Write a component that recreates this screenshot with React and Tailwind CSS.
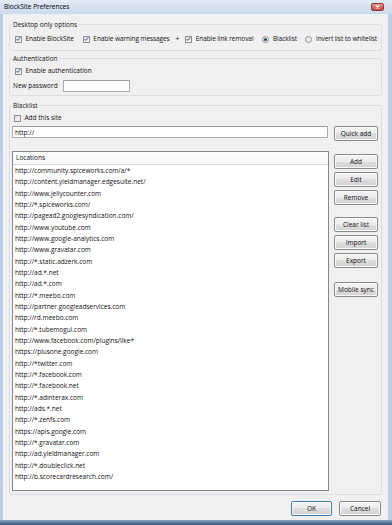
import React from "react";

const urls = [
  "http://community.spiceworks.com/a/*",
  "http://content.yieldmanager.edgesuite.net/",
  "http://www.jellycounter.com",
  "http://*.spiceworks.com/",
  "http://pagead2.googlesyndication.com/",
  "http://www.youtube.com",
  "http://www.google-analytics.com",
  "http://www.gravatar.com",
  "http://*.static.adzerk.com",
  "http://ad.*.net",
  "http://ad.*.com",
  "http://*.meebo.com",
  "http://partner.googleadservices.com",
  "http://rd.meebo.com",
  "http://*.tubemogul.com",
  "http://www.facebook.com/plugins/like*",
  "https://plusone.google.com",
  "http://*twitter.com",
  "http://*.facebook.com",
  "http://*.facebook.net",
  "http://*.adinterax.com",
  "http://ads.*.net",
  "http://*.zenfs.com",
  "https://apis.google.com",
  "http://*.gravatar.com",
  "http://ad.yieldmanager.com",
  "http://*.doubleclick.net",
  "http://b.scorecardresearch.com/",
];

function Check({ checked }) {
  return (
    <span className="flex h-[7px] w-[7px] shrink-0 items-center justify-center border border-[#8e8f8f] bg-gradient-to-br from-[#dedede] to-[#fafafa]">
      {checked && (
        <svg width="6" height="6" viewBox="0 0 6 6">
          <path d="M0.8 3.1 L2.3 4.7 L5.2 0.9" fill="none" stroke="#3d5a8e" strokeWidth="1.1" />
        </svg>
      )}
    </span>
  );
}

function Radio({ checked }) {
  return (
    <span className="flex h-[7px] w-[7px] shrink-0 items-center justify-center rounded-full border border-[#8e8f8f] bg-gradient-to-br from-[#dcdcdc] to-[#fafafa]">
      {checked && <span className="h-[3px] w-[3px] rounded-full bg-[#1d3f6e]" />}
    </span>
  );
}

function Btn({ children, className = "" }) {
  return (
    <button
      className={
        "flex h-[15px] w-[44px] shrink-0 items-center justify-center whitespace-nowrap rounded-[2px] border border-[#8a8a8a] bg-[linear-gradient(#f4f4f4,#ececec_50%,#dedede_50%,#d2d2d2)] text-[6.5px] text-[#111] shadow-[inset_0_0_0_1px_#fafafa] " +
        className
      }
    >
      {children}
    </button>
  );
}

export default function App() {
  return (
    <div className="flex h-[525px] w-[392px] flex-col bg-[#bcd0e8] font-['Open_Sans',sans-serif] text-[6.5px] text-[#111]">
      {/* title bar */}
      <div className="flex h-[14px] shrink-0 items-center justify-between bg-gradient-to-b from-[#e2ebf6] to-[#cbdaec] pl-[4px] pr-[8px]">
        <span className="text-[6.5px] text-black">BlockSite Preferences</span>
        <span className="flex h-[8px] w-[13px] items-center justify-center rounded-[2px] border border-[#8c3a32] bg-gradient-to-b from-[#e5968a] to-[#c3483b]">
          <svg width="5" height="4" viewBox="0 0 5 4">
            <path d="M0.8 0.5 L4.2 3.5 M4.2 0.5 L0.8 3.5" stroke="#fff" strokeWidth="1.1" />
          </svg>
        </span>
      </div>

      {/* client area */}
      <div className="ml-[3px] mr-[4px] flex flex-1 flex-col bg-[#f0f0f0] pl-[6px] pr-[6px]">
        <fieldset className="mt-[6px] rounded-[3px] border border-[#d8dfe4] pb-[6px] pl-[2px] pr-[3px]">
          <legend className="px-[1px] leading-[9px]">Desktop only options</legend>
          <div className="mt-[5px] flex h-[10px] items-center whitespace-nowrap pl-[3px] tracking-[-0.08px]">
            <Check checked />
            <span className="ml-[3.5px] shrink-0">Enable BlockSite</span>
            <span className="ml-[9px] shrink-0"><Check checked /></span>
            <span className="ml-[3.5px] shrink-0">Enable warning messages</span>
            <span className="ml-[6px] shrink-0">+</span>
            <span className="ml-[6px] shrink-0"><Check checked /></span>
            <span className="ml-[3.5px] shrink-0">Enable link removal</span>
            <span className="ml-[8.5px] shrink-0"><Radio checked /></span>
            <span className="ml-[4px] shrink-0">Blacklist</span>
            <span className="ml-[8px] shrink-0"><Radio /></span>
            <span className="ml-[4px] shrink-0">Invert list to whitelist</span>
          </div>
        </fieldset>

        <fieldset className="mt-[3px] rounded-[3px] border border-[#d8dfe4] pb-[3px] pl-[2px] pr-[3px]">
          <legend className="px-[1px] leading-[9px]">Authentication</legend>
          <div className="mt-[3px] flex h-[10px] items-center pl-[3px]">
            <Check checked />
            <span className="ml-[3.5px]">Enable authentication</span>
          </div>
          <div className="mt-[4px] flex items-center pl-[1px]">
            <span>New password</span>
            <input
              type="password"
              className="ml-[5px] h-[12px] w-[67px] border border-[#abadb3] border-t-[#9a9ca3] bg-white outline-none"
            />
          </div>
        </fieldset>

        <fieldset className="mt-[5px] flex min-h-0 flex-1 flex-col rounded-[3px] border border-[#d8dfe4] pb-[3px] pl-[2px] pr-[3px]">
          <legend className="px-[1px] leading-[9px]">Blacklist</legend>
          <div className="mt-[3px] flex h-[10px] items-center pl-[2px]">
            <Check />
            <span className="ml-[3.5px]">Add this site</span>
          </div>
          <div className="mt-[3px] flex items-start justify-between">
            <input
              defaultValue="http://"
              className="h-[12px] w-[316px] border border-[#abadb3] border-t-[#9a9ca3] bg-white pl-[2px] text-[6.5px] text-[#111] outline-none"
            />
            <Btn>Quick add</Btn>
          </div>
          <div className="mt-[10px] flex min-h-0 flex-1 justify-between">
            <div className="flex w-[317px] flex-col border border-[#828790] bg-white">
              <div className="flex h-[13px] shrink-0 items-center border-b border-[#d5d5d5] bg-gradient-to-b from-white to-[#f4f5f7] pl-[3px]">
                Locations
              </div>
              <ul className="pl-[2px]">
                {urls.map((u) => (
                  <li key={u} className="h-[11.33px] leading-[11.33px]">
                    {u}
                  </li>
                ))}
              </ul>
            </div>
            <div className="flex flex-col pt-[3px]">
              <Btn>Add</Btn>
              <Btn className="mt-[3px]">Edit</Btn>
              <Btn className="mt-[3px]">Remove</Btn>
              <Btn className="mt-[12px]">Clear list</Btn>
              <Btn className="mt-[3px]">Import</Btn>
              <Btn className="mt-[3px]">Export</Btn>
              <Btn className="mt-[14px]">Mobile sync</Btn>
            </div>
          </div>
        </fieldset>

        <div className="mb-[4px] mt-[6px] flex justify-end pr-[1px]">
          <Btn className="!w-[41px] !border-[#3c7fb1] shadow-[inset_0_0_0_1px_#bfe6f8]">OK</Btn>
          <Btn className="ml-[7px] !w-[42px]">Cancel</Btn>
        </div>
      </div>

      {/* bottom frame */}
      <div className="h-[5px] shrink-0 bg-gradient-to-b from-[#8aa6c8] to-[#34547e]" />
    </div>
  );
}
